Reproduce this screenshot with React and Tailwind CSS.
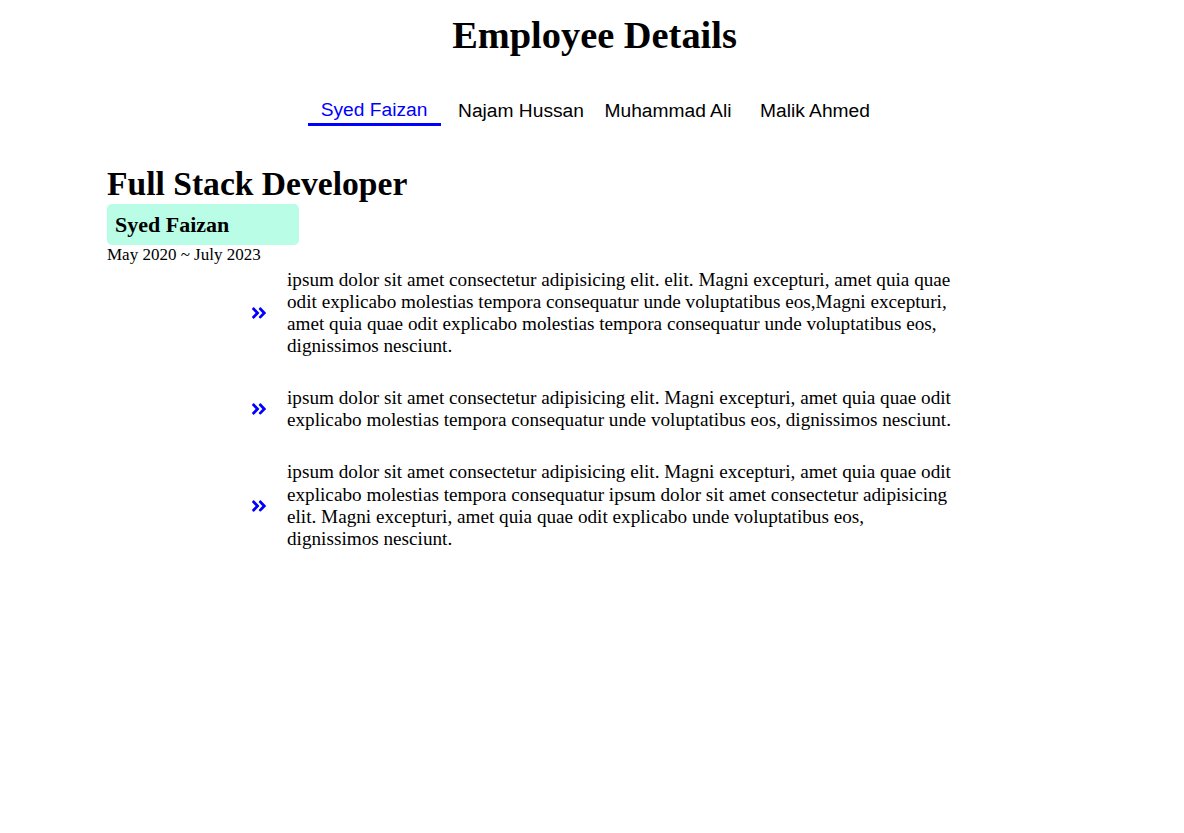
import React from "react";

const serif = { fontFamily: '"Liberation Serif", "Times New Roman", serif' };

function Chevrons() {
  return (
    <svg viewBox="0 0 448 512" width="18" height="18" fill="#0000ff" className="shrink-0">
      <path d="M224.3 273l-136 136c-9.4 9.4-24.6 9.4-33.9 0l-22.6-22.6c-9.4-9.4-9.4-24.6 0-33.9l96.4-96.4-96.4-96.4c-9.4-9.4-9.4-24.6 0-33.9L54.3 103c9.4-9.4 24.6-9.4 33.9 0l136 136c9.5 9.4 9.5 24.6.1 34zm192-34l-136-136c-9.4-9.4-24.6-9.4-33.9 0l-22.6 22.6c-9.4 9.4-9.4 24.6 0 33.9l96.4 96.4-96.4 96.4c-9.4 9.4-9.4 24.6 0 33.9l22.6 22.6c9.4 9.4 24.6 9.4 33.9 0l136-136c9.4-9.2 9.4-24.4 0-33.8z" />
    </svg>
  );
}

const tabs = ["Syed Faizan", "Najam Hussan", "Muhammad Ali", "Malik Ahmed"];

const duties = [
  "ipsum dolor sit amet consectetur adipisicing elit. elit. Magni excepturi, amet quia quae odit explicabo molestias tempora consequatur unde voluptatibus eos,Magni excepturi, amet quia quae odit explicabo molestias tempora consequatur unde voluptatibus eos, dignissimos nesciunt.",
  "ipsum dolor sit amet consectetur adipisicing elit. Magni excepturi, amet quia quae odit explicabo molestias tempora consequatur unde voluptatibus eos, dignissimos nesciunt.",
  "ipsum dolor sit amet consectetur adipisicing elit. Magni excepturi, amet quia quae odit explicabo molestias tempora consequatur ipsum dolor sit amet consectetur adipisicing elit. Magni excepturi, amet quia quae odit explicabo unde voluptatibus eos, dignissimos nesciunt.",
];

export default function App() {
  return (
    <div className="min-h-[833px] bg-white text-black pl-[5px]" style={serif}>
      <h1 className="mt-[13px] text-center text-[38.4px] leading-[44px] font-bold">
        Employee Details
      </h1>
      <div
        className="mt-[39px] flex items-center justify-center gap-[14px]"
        style={{ fontFamily: '"Liberation Sans", Arial, sans-serif' }}
      >
        {tabs.map((t, i) => (
          <button
            key={t}
            className={
              i === 0
                ? "w-[133px] py-[2.5px] text-[19.2px] leading-[22px] text-[#0000ff] border-b-[3px] border-[#0000ff]"
                : "w-[133px] py-[2.5px] text-[19.2px] leading-[22px] text-black"
            }
          >
            {t}
          </button>
        ))}
      </div>
      <div className="mt-[39px] pl-[102px]">
        <h2 className="text-[33.6px] leading-[38.6px] font-bold">Full Stack Developer</h2>
        <div className="w-[192px] rounded-[5px] bg-[#b9fde6] px-2 py-2">
          <h3 className="text-[22px] leading-[25px] font-bold">Syed Faizan</h3>
        </div>
        <p className="text-[17px] leading-[19.5px]">May 2020 ~ July 2023</p>
        <div className="mt-[5px] flex flex-col gap-[30px]">
          {duties.map((d, i) => (
            <div key={i} className="flex items-center gap-[19px] pl-[143px]">
              <Chevrons />
              <p className="w-[668px] text-[19.2px] leading-[22.07px]">{d}</p>
            </div>
          ))}
        </div>
      </div>
    </div>
  );
}
